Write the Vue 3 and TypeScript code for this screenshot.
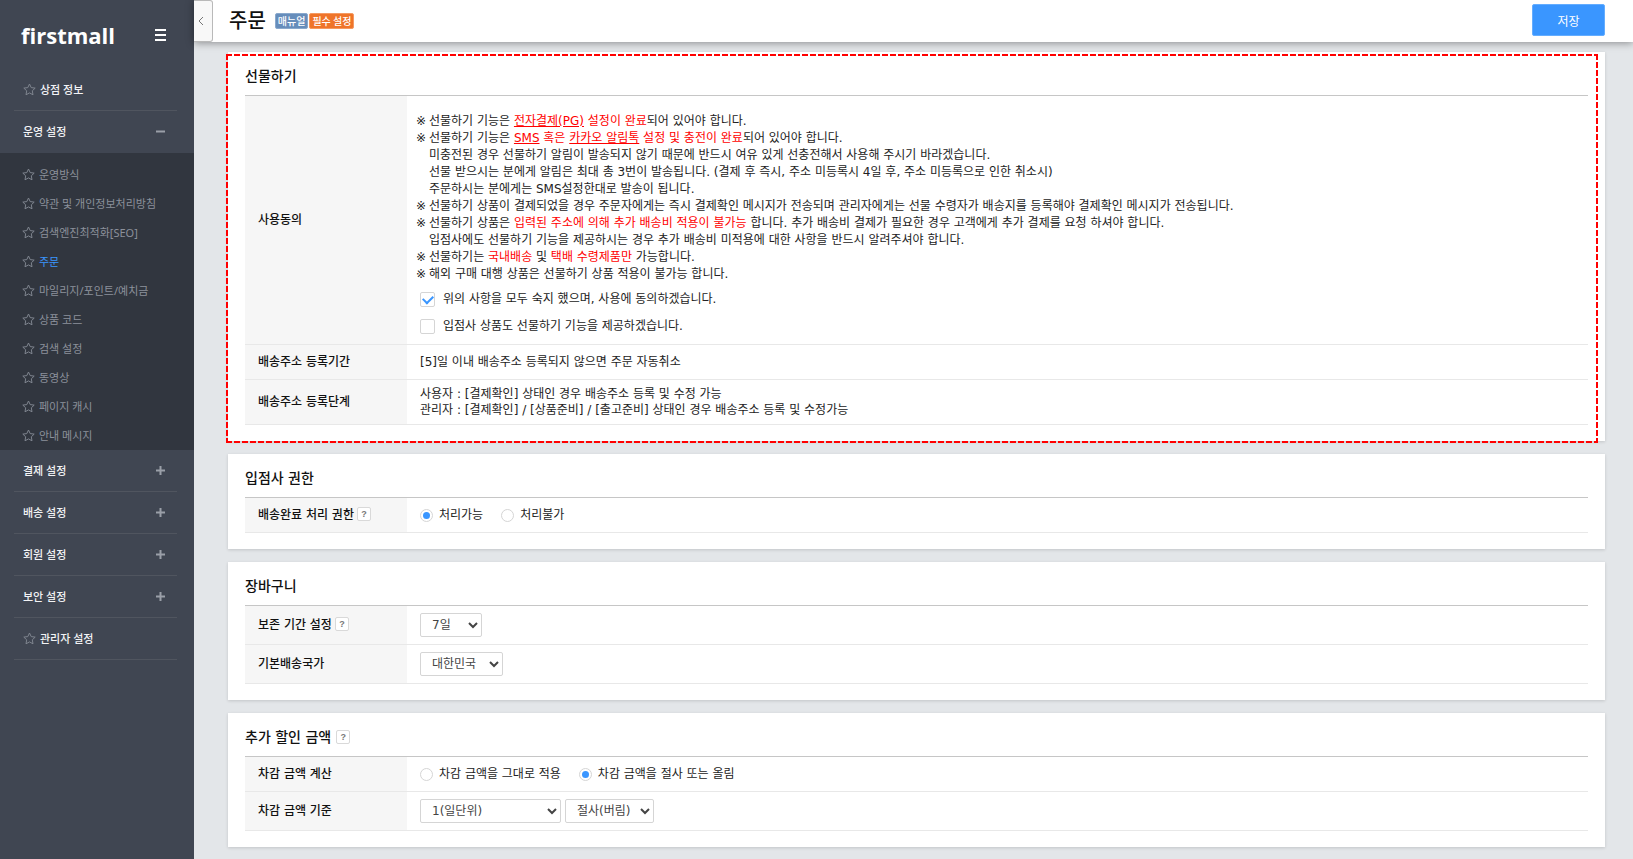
<script setup lang="ts">
import { ref } from 'vue'

interface MenuGroup {
  label: string
  star?: boolean
  children?: string[]
}

const groups: MenuGroup[] = [
  { label: '상점 정보', star: true },
  {
    label: '운영 설정',
    children: [
      '운영방식',
      '약관 및 개인정보처리방침',
      '검색엔진최적화[SEO]',
      '주문',
      '마일리지/포인트/예치금',
      '상품 코드',
      '검색 설정',
      '동영상',
      '페이지 캐시',
      '안내 메시지',
    ],
  },
  { label: '결제 설정' },
  { label: '배송 설정' },
  { label: '회원 설정' },
  { label: '보안 설정' },
  { label: '관리자 설정', star: true },
]

const current = ref('주문')
const agreed = ref(true)
const sellerGift = ref(false)
const permission = ref('allow')
const keepDays = ref('7일')
const country = ref('대한민국')
const discountMode = ref('round')
const unit = ref('1(일단위)')
const rounding = ref('절사(버림)')
</script>

<template>
  <div class="app">
    <aside class="sidebar">
      <div class="brand">
        <a href="#" class="logo">firstmall</a>
        <button type="button" class="burger" aria-label="메뉴">
          <svg width="11" height="12" viewBox="0 0 11 12"><path d="M0 1h11M0 6h11M0 11h11" stroke="#fff" stroke-width="2" /></svg>
        </button>
      </div>
      <nav>
        <div v-for="g in groups" :key="g.label" class="group" :class="{ open: g.children }">
          <a href="#" class="group-link">
            <svg v-if="g.star" class="star" viewBox="0 0 13 13"><path d="M6.5 1l1.7 3.6 4 .5-2.9 2.7.7 4-3.5-1.9L3 11.800l.7-4L.8 5.100l4-.5z" /></svg>
            <span>{{ g.label }}</span>
            <svg v-if="!g.star" class="sign" viewBox="0 0 9 9">
              <path :d="g.children ? 'M0 4.500h9' : 'M0 4.500h9M4.500 0v9'" />
            </svg>
          </a>
          <ul v-if="g.children" class="sub">
            <li v-for="c in g.children" :key="c">
              <a href="#" :class="{ active: c === current }" @click.prevent="current = c">
                <svg class="star" viewBox="0 0 13 13"><path d="M6.5 1l1.7 3.6 4 .5-2.9 2.7.7 4-3.5-1.9L3 11.800l.7-4L.8 5.100l4-.5z" /></svg>
                <span>{{ c }}</span>
              </a>
            </li>
          </ul>
        </div>
      </nav>
    </aside>

    <div class="page">
      <header class="topbar">
        <button type="button" class="collapse" aria-label="접기">
          <svg width="6" height="10" viewBox="0 0 6 10"><path d="M5 1L1 5l4 4" fill="none" stroke="#777" /></svg>
        </button>
        <h1>주문</h1>
        <a href="#" class="badge manual">매뉴얼</a>
        <a href="#" class="badge required">필수 설정</a>
        <button type="button" class="save">저장</button>
      </header>

      <main class="content">
        <section class="card">
          <div class="highlight"></div>
          <h2>선물하기</h2>
          <table>
            <tbody>
              <tr>
                <th scope="row">사용동의</th>
                <td class="terms">
                  <ul class="notice">
                    <li><i>※</i><span>선물하기 기능은 <em><a href="#">전자결제(PG)</a> 설정이 완료</em>되어 있어야 합니다.</span></li>
                    <li><i>※</i><span>선물하기 기능은 <em><a href="#">SMS</a> 혹은 <a href="#">카카오 알림톡</a> 설정 및 충전이 완료</em>되어 있어야 합니다.</span></li>
                    <li><i></i><span>미충전된 경우 선물하기 알림이 발송되지 않기 때문에 반드시 여유 있게 선충전해서 사용해 주시기 바라겠습니다.</span></li>
                    <li><i></i><span>선물 받으시는 분에게 알림은 최대 총 3번이 발송됩니다. (결제 후 즉시, 주소 미등록시 4일 후, 주소 미등록으로 인한 취소시)</span></li>
                    <li><i></i><span>주문하시는 분에게는 SMS설정한대로 발송이 됩니다.</span></li>
                    <li><i>※</i><span>선물하기 상품이 결제되었을 경우 주문자에게는 즉시 결제확인 메시지가 전송되며 관리자에게는 선물 수령자가 배송지를 등록해야 결제확인 메시지가 전송됩니다.</span></li>
                    <li><i>※</i><span>선물하기 상품은 <em>입력된 주소에 의해 추가 배송비 적용이 불가능</em> 합니다. 추가 배송비 결제가 필요한 경우 고객에게 추가 결제를 요청 하셔야 합니다.</span></li>
                    <li><i></i><span>입점사에도 선물하기 기능을 제공하시는 경우 추가 배송비 미적용에 대한 사항을 반드시 알려주셔야 합니다.</span></li>
                    <li><i>※</i><span>선물하기는 <em>국내배송</em> 및 <em>택배 수령제품만</em> 가능합니다.</span></li>
                    <li><i>※</i><span>해외 구매 대행 상품은 선물하기 상품 적용이 불가능 합니다.</span></li>
                  </ul>
                  <label class="check"><input v-model="agreed" type="checkbox" />위의 사항을 모두 숙지 했으며, 사용에 동의하겠습니다.</label>
                  <label class="check"><input v-model="sellerGift" type="checkbox" />입점사 상품도 선물하기 기능을 제공하겠습니다.</label>
                </td>
              </tr>
              <tr class="slim">
                <th scope="row">배송주소 등록기간</th>
                <td>[5]일 이내 배송주소 등록되지 않으면 주문 자동취소</td>
              </tr>
              <tr class="double">
                <th scope="row">배송주소 등록단계</th>
                <td>
                  <p>사용자 : [결제확인] 상태인 경우 배송주소 등록 및 수정 가능</p>
                  <p>관리자 : [결제확인] / [상품준비] / [출고준비] 상태인 경우 배송주소 등록 및 수정가능</p>
                </td>
              </tr>
            </tbody>
          </table>
        </section>

        <section class="card">
          <h2>입점사 권한</h2>
          <table>
            <tbody>
              <tr class="slim">
                <th scope="row">배송완료 처리 권한<button type="button" class="help" aria-label="도움말">?</button></th>
                <td>
                  <div class="row">
                    <label class="radio"><input v-model="permission" type="radio" name="permission" value="allow" />처리가능</label>
                    <label class="radio"><input v-model="permission" type="radio" name="permission" value="deny" />처리불가</label>
                  </div>
                </td>
              </tr>
            </tbody>
          </table>
        </section>

        <section class="card">
          <h2>장바구니</h2>
          <table>
            <tbody>
              <tr class="field">
                <th scope="row"><label for="keep">보존 기간 설정</label><button type="button" class="help" aria-label="도움말">?</button></th>
                <td><select id="keep" v-model="keepDays" class="w-s"><option>7일</option></select></td>
              </tr>
              <tr class="field">
                <th scope="row"><label for="country">기본배송국가</label></th>
                <td><select id="country" v-model="country" class="w-m"><option>대한민국</option></select></td>
              </tr>
            </tbody>
          </table>
        </section>

        <section class="card">
          <h2>추가 할인 금액<button type="button" class="help" aria-label="도움말">?</button></h2>
          <table>
            <tbody>
              <tr class="slim">
                <th scope="row">차감 금액 계산</th>
                <td>
                  <div class="row">
                    <label class="radio"><input v-model="discountMode" type="radio" name="discount" value="keep" />차감 금액을 그대로 적용</label>
                    <label class="radio"><input v-model="discountMode" type="radio" name="discount" value="round" />차감 금액을 절사 또는 올림</label>
                  </div>
                </td>
              </tr>
              <tr class="field">
                <th scope="row"><label for="unit">차감 금액 기준</label></th>
                <td>
                  <div class="row tight">
                    <select id="unit" v-model="unit" class="w-l"><option>1(일단위)</option></select>
                    <select v-model="rounding" class="w-n" aria-label="절사 방식"><option>절사(버림)</option></select>
                  </div>
                </td>
              </tr>
            </tbody>
          </table>
        </section>
      </main>
    </div>
  </div>
</template>

<style>
body {
  margin: 0;
}
</style>

<style scoped>
.app {
  display: flex;
  min-height: 100vh;
  background: #e3e6e9;
  color: #222;
  font: 12px/17px "DejaVu Sans", "Noto Sans CJK KR", sans-serif;
}
.app * {
  box-sizing: border-box;
}
button,
select {
  font-family: inherit;
}
button {
  padding: 0;
  cursor: pointer;
}
a {
  color: inherit;
  text-decoration: none;
}
ul {
  margin: 0;
  padding: 0;
  list-style: none;
}
p {
  margin: 0;
}

/* sidebar */
.sidebar {
  flex: none;
  width: 194px;
  background: #404652;
  font: 11px/16px "Noto Sans", "Noto Sans CJK KR", sans-serif;
}
.brand {
  display: flex;
  align-items: center;
  justify-content: space-between;
  height: 69px;
  padding: 0 28px 0 21px;
}
.logo {
  color: #fff;
  font: 700 22px/28px "Open Sans", sans-serif;
}
.burger {
  display: flex;
  background: none;
  border: 0;
}
.group-link {
  display: flex;
  align-items: center;
  height: 42px;
  margin: 0 17px 0 14px;
  padding: 0 12px 0 9px;
  border-bottom: 1px solid #50555f;
  color: #f2f3f5;
  font-weight: 500;
}
.open .group-link {
  border-color: transparent;
}
.star {
  flex: none;
  width: 13px;
  height: 13px;
  margin-right: 4px;
  fill: none;
  stroke: #7f858f;
}
.sign {
  width: 9px;
  height: 9px;
  margin-left: auto;
  fill: none;
  stroke: #9a9fa8;
  stroke-width: 2;
}
.sub {
  padding-top: 7px;
  background: #31363f;
}
.sub a {
  display: flex;
  align-items: center;
  height: 29px;
  padding-left: 22px;
  color: #8c919b;
}
.sub .active {
  color: #3a96ff;
}

/* top bar */
.page {
  flex: 1;
  min-width: 0;
}
.topbar {
  position: relative;
  display: flex;
  align-items: center;
  height: 42px;
  padding-right: 28px;
  background: #fff;
  box-shadow: 0 1px 8px rgba(0, 0, 0, 0.4);
}
.collapse {
  width: 19px;
  height: 42px;
  padding-right: 4px;
  background: #f8f8f8;
  border: 1px solid #b9b9b9;
  border-left: 0;
  border-radius: 0 3px 3px 0;
}
h1 {
  margin: 0 9px 0 16px;
  color: #111;
  font-size: 20px;
  font-weight: 500;
  line-height: 28px;
}
.badge {
  margin-right: 1px;
  padding: 0 2px;
  border: 1px solid #8aa9cd;
  border-radius: 2px;
  background: #668dbb;
  color: #fff;
  font: 500 10px/14px "Noto Sans CJK KR", sans-serif;
}
.required {
  border-color: #f59a62;
  background: #ef7429;
}
.save {
  width: 73px;
  height: 32px;
  margin: 0 0 2px auto;
  background: #3a96ff;
  border: 1px solid #64adff;
  border-radius: 2px;
  color: #fff;
  font-size: 12px;
}

/* cards */
.content {
  display: flex;
  flex-direction: column;
  gap: 13px;
  padding: 10px 28px 12px 34px;
}
.card {
  position: relative;
  padding: 0 17px 16px;
  background: #fff;
  box-shadow: 0 1px 3px rgba(0, 0, 0, 0.15);
}
.highlight {
  --h: repeating-linear-gradient(90deg, #f00 0 6px, transparent 6px 8px);
  --v: repeating-linear-gradient(180deg, #f00 0 6px, transparent 6px 8px);
  position: absolute;
  inset: 2px 7px -2px -2px;
  background: var(--h) 0 0 / 100% 2px no-repeat, var(--h) 0 100% / 100% 2px no-repeat,
    var(--v) 0 0 / 2px 100% no-repeat, var(--v) 100% 0 / 2px 100% no-repeat;
  pointer-events: none;
}
h2 {
  display: flex;
  align-items: center;
  height: 43px;
  margin: 0;
  padding-top: 4px;
  color: #111;
  font-size: 14px;
  font-weight: 500;
  line-height: 20px;
}
table {
  width: 100%;
  border-collapse: separate;
  border-spacing: 0;
  border-top: 1px solid #c6c6c6;
}
th,
td {
  padding: 0 13px;
  border-bottom: 1px solid #e8e8e8;
  text-align: left;
  vertical-align: middle;
}
th {
  width: 162px;
  background: #f6f6f6;
  color: #111;
  font-weight: 500;
}
.slim td {
  height: 35px;
}
.double td {
  height: 45px;
  line-height: 16px;
}
.field td {
  height: 39px;
}
td.terms {
  padding: 17px 9px 4px;
}
.notice {
  margin-bottom: 3px;
}
.notice li {
  display: flex;
}
.notice i {
  flex: none;
  width: 13px;
  font-style: normal;
}
.notice em {
  color: #f00;
  font-style: normal;
}
.notice a {
  text-decoration: underline;
}
.check {
  display: flex;
  align-items: center;
  gap: 8px;
  height: 27px;
  padding-left: 4px;
}
input {
  display: grid;
  place-content: center;
  flex: none;
  appearance: none;
  margin: 0;
  background: #fff;
  border: 1px solid #d5d5d5;
}
input[type="checkbox"] {
  width: 15px;
  height: 15px;
  border-radius: 2px;
}
input[type="checkbox"]:checked::before {
  content: "";
  width: 8px;
  height: 5px;
  margin-bottom: 3px;
  border: solid #3a96ff;
  border-width: 0 0 2px 2px;
  transform: rotate(-45deg);
}
.row {
  display: flex;
  align-items: center;
  gap: 18px;
}
.tight {
  gap: 4px;
}
.radio {
  display: flex;
  align-items: center;
  gap: 6px;
}
input[type="radio"] {
  width: 13px;
  height: 13px;
  border-radius: 50%;
}
input[type="radio"]:checked::before {
  content: "";
  width: 7px;
  height: 7px;
  border-radius: 50%;
  background: #3a96ff;
}
.help {
  width: 14px;
  height: 14px;
  margin: 0 0 2px 3px;
  background: #fff;
  border: 1px solid #d9d9d9;
  border-radius: 2px;
  color: #777;
  font: 700 9px/12px "Liberation Sans", sans-serif;
  vertical-align: middle;
}
h2 .help {
  margin: 0 0 0 5px;
}
select {
  height: 24px;
  padding: 0 0 0 7px;
  background: #fff;
  border: 1px solid #d5d5d5;
  border-radius: 2px;
  color: #444;
  font-size: 12px;
  vertical-align: middle;
}
.w-s {
  width: 62px;
}
.w-m {
  width: 83px;
}
.w-l {
  width: 141px;
}
.w-n {
  width: 89px;
}
</style>
